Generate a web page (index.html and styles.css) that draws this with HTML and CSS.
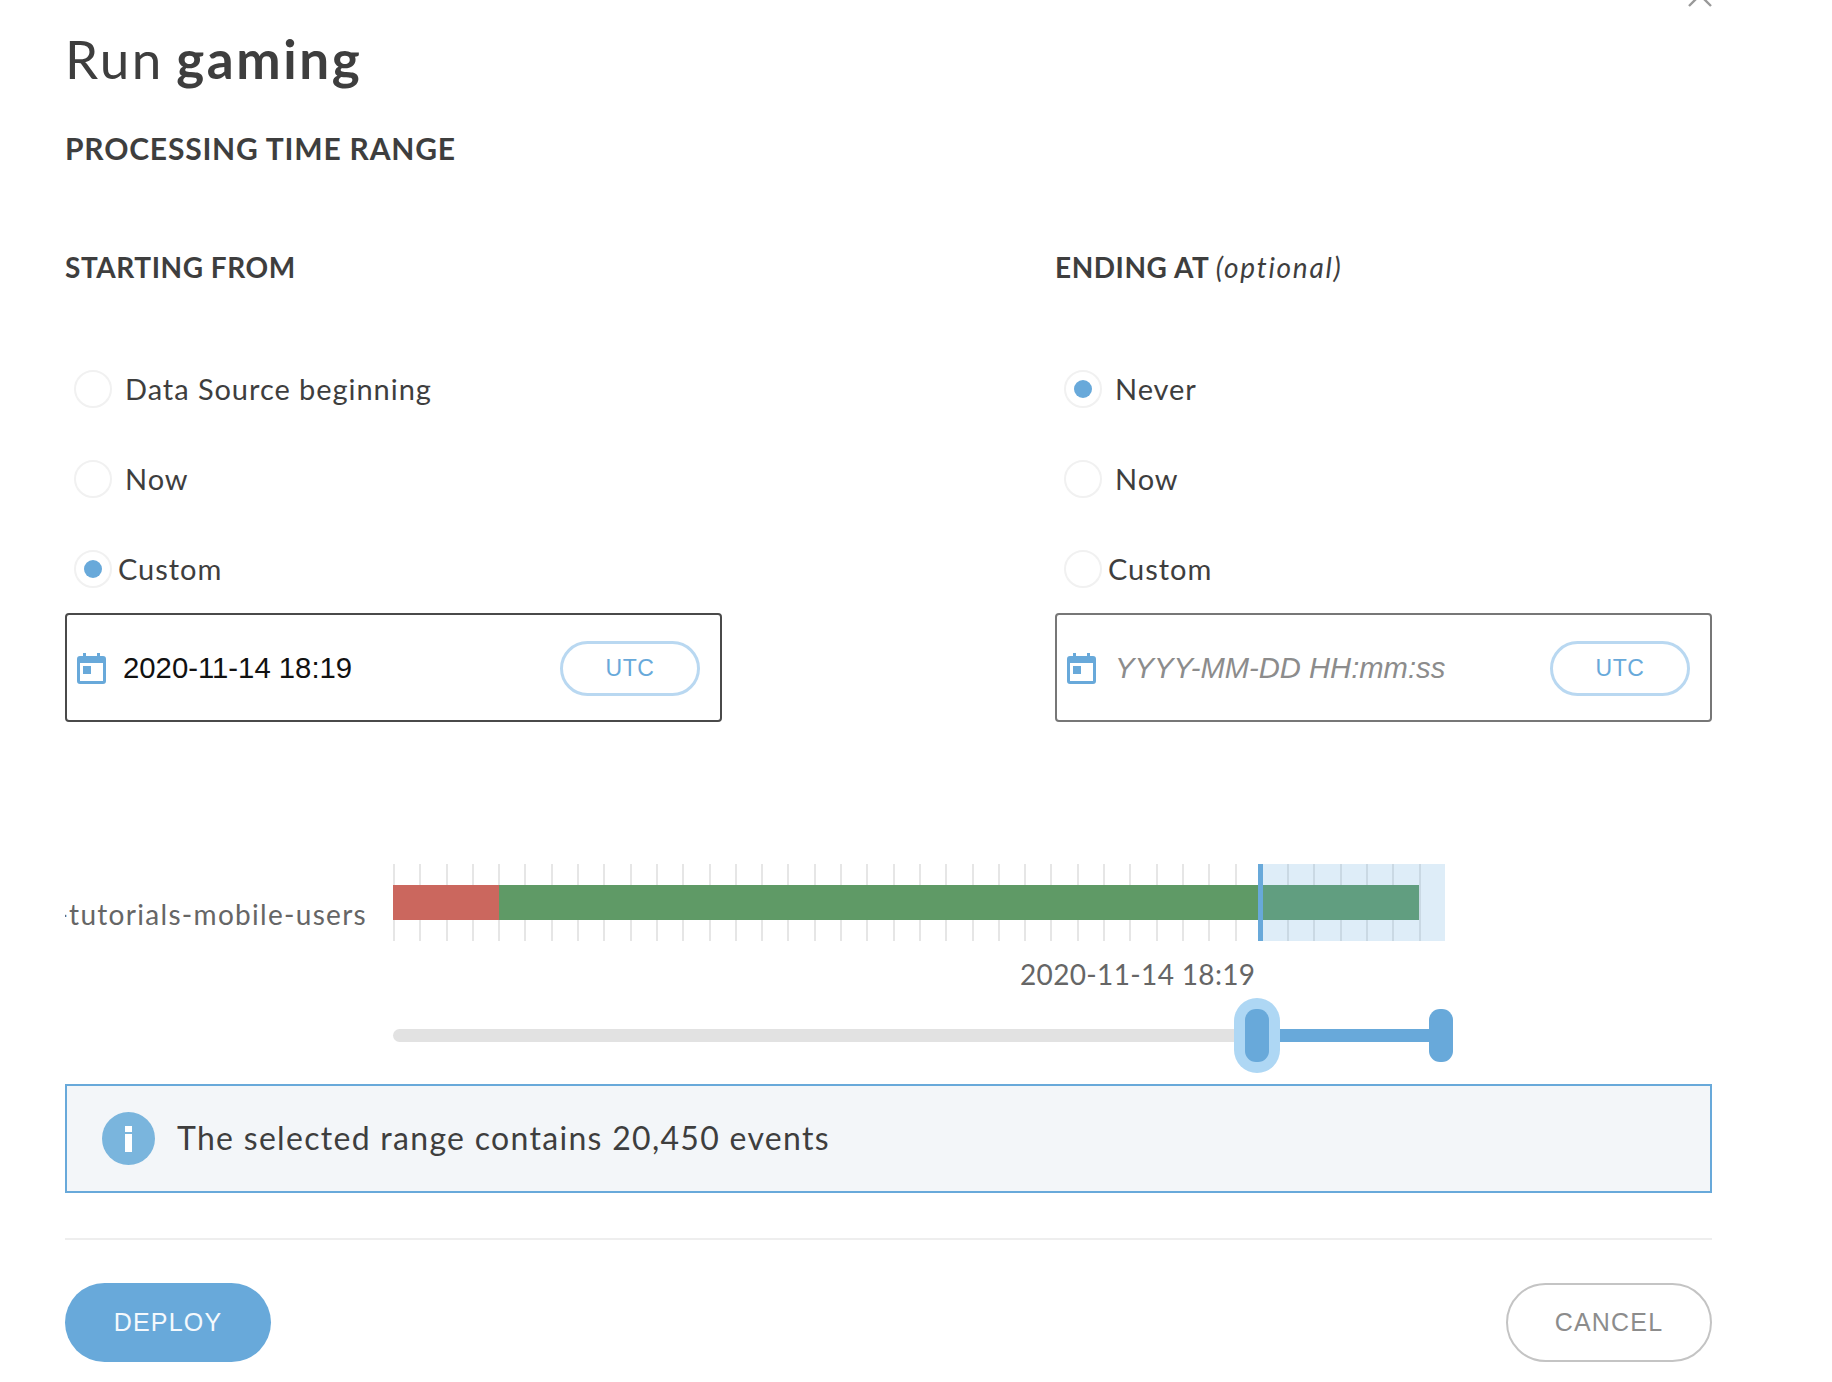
FILE: index.html
```html
<!DOCTYPE html>
<html lang="en">
<head>
<meta charset="utf-8">
<title>Run gaming</title>
<link rel="stylesheet" href="styles.css">
</head>
<body>
<main class="dialog">
  <button class="close" aria-label="Close">
    <svg width="26" height="26" viewBox="0 0 26 26"><path d="M2 2 L24 24 M24 2 L2 24" fill="none" stroke="#999" stroke-width="2.4"/></svg>
  </button>
  <h1 class="title">Run <b>gaming</b></h1>
  <h2 class="section">PROCESSING TIME RANGE</h2>
  <div class="columns">
    <section class="col">
      <h3 class="col-head">STARTING FROM</h3>
      <div class="radios">
        <div class="radio"><span class="dot"></span><span class="radio-label">Data Source beginning</span></div>
        <div class="radio"><span class="dot"></span><span class="radio-label">Now</span></div>
        <div class="radio tight"><span class="dot on"></span><span class="radio-label">Custom</span></div>
      </div>
      <div class="input dark">
        <svg class="cal" width="29" height="31" viewBox="0 0 29 31"><path fill-rule="evenodd" d="M6 0h3v3h11V0h3v3h3a3 3 0 0 1 3 3v22a3 3 0 0 1-3 3H3a3 3 0 0 1-3-3V6a3 3 0 0 1 3-3h3zM3 10v18h23V10z" fill="#68a9da"/><rect x="6" y="13" width="8" height="8" fill="#68a9da"/></svg>
        <span class="value">2020-11-14 18:19</span>
        <span class="utc">UTC</span>
      </div>
    </section>
    <section class="col">
      <h3 class="col-head">ENDING AT <em>(optional)</em></h3>
      <div class="radios">
        <div class="radio"><span class="dot on"></span><span class="radio-label">Never</span></div>
        <div class="radio"><span class="dot"></span><span class="radio-label">Now</span></div>
        <div class="radio tight"><span class="dot"></span><span class="radio-label">Custom</span></div>
      </div>
      <div class="input">
        <svg class="cal" width="29" height="31" viewBox="0 0 29 31"><path fill-rule="evenodd" d="M6 0h3v3h11V0h3v3h3a3 3 0 0 1 3 3v22a3 3 0 0 1-3 3H3a3 3 0 0 1-3-3V6a3 3 0 0 1 3-3h3zM3 10v18h23V10z" fill="#68a9da"/><rect x="6" y="13" width="8" height="8" fill="#68a9da"/></svg>
        <span class="value placeholder">YYYY-MM-DD HH:mm:ss</span>
        <span class="utc">UTC</span>
      </div>
    </section>
  </div>

  <div class="timeline">
    <div class="tl-label"><span>-tutorials-mobile-users</span></div>
    <div class="tl-track">
      <div class="tl-ticks"></div>
      <div class="tl-bar">
        <div class="seg-red"></div>
        <div class="seg-green"></div>
      </div>
      <div class="tl-shade"></div>
    </div>
  </div>

  <div class="range-label">2020-11-14 18:19</div>

  <div class="slider">
    <div class="slider-rail"></div>
    <div class="slider-fill"></div>
    <div class="halo"></div>
    <div class="handle h1"></div>
    <div class="handle h2"></div>
  </div>

  <div class="alert">
    <svg class="info" width="53" height="53" viewBox="0 0 53 53"><circle cx="26.5" cy="26.5" r="26.5" fill="#7ab5dd"/><rect x="23" y="14" width="7" height="6" fill="#fff"/><rect x="23" y="22" width="7" height="18" fill="#fff"/></svg>
    <span class="alert-text">The selected range contains 20,450 events</span>
  </div>

  <hr class="divider">

  <div class="actions">
    <button class="btn primary">DEPLOY</button>
    <button class="btn ghost">CANCEL</button>
  </div>
</main>
</body>
</html>
```
FILE: styles.css
```css
* { box-sizing: border-box; }
html, body { margin: 0; padding: 0; background: #fff; }
body { height: 1382px; overflow: hidden; font-family: "Lato", "Open Sans", sans-serif; color: #3e3e3e; }

.dialog { position: relative; width: 1647px; margin-left: 65px; padding-top: 28px; }

.close { position: absolute; top: -18px; right: -1px; padding: 0; border: 0; background: none; line-height: 0; }

.title { margin: 0; font-size: 53px; line-height: 62px; font-weight: 400; letter-spacing: 2.6px; word-spacing: -4px; color: #3e3e3e; }
.title b { font-weight: 700; }

.section { margin: 38px 0 0; font-size: 30px; line-height: 40px; font-weight: 700; letter-spacing: .8px; color: #3e3e3e; }

.columns { display: grid; grid-template-columns: 657px 657px; column-gap: 333px; margin-top: 79px; }

.col-head { margin: 0; font-size: 28px; line-height: 40px; font-weight: 700; letter-spacing: .55px; color: #3e3e3e; }
.col-head em { font-weight: 400; font-style: italic; letter-spacing: 1.75px; }

.radios { display: flex; flex-direction: column; gap: 52px; margin-top: 83px; padding-left: 9px; }
.radio { display: flex; align-items: center; height: 38px; gap: 13px; }
.radio.tight { gap: 6px; }
.dot { position: relative; flex: none; width: 38px; height: 38px; border-radius: 50%; border: 2px solid #f1f1f1; background: #fff; }
.dot.on::after { content: ""; position: absolute; left: 8px; top: 8px; width: 18px; height: 18px; border-radius: 50%; background: #68a9da; }
.radio-label { font-size: 29px; line-height: 38px; letter-spacing: .95px; color: #3e3e3e; }

.input { display: flex; align-items: center; height: 109px; margin-top: 25px; padding: 1px 20px 0 10px; border: 2px solid #777; border-radius: 4px; }
.input.dark { border-color: #4a4a4a; }
.cal { flex: none; }
.value { flex: 1; margin-left: 17px; font-family: "Liberation Sans", Arial, sans-serif; font-size: 29.3px; color: #111; }
.placeholder { margin-left: 19px; font-size: 29.2px; font-style: italic; color: #8c8c8c; }
.utc { display: flex; align-items: center; justify-content: center; flex: none; width: 140px; height: 55px; border: 3px solid #b9d8f1; border-radius: 28px; font-family: "Liberation Sans", Arial, sans-serif; font-size: 23px; letter-spacing: .6px; color: #68a9da; }

.timeline { display: flex; margin-top: 142px; height: 77px; }
.tl-label { display: flex; justify-content: flex-end; flex: none; width: 302px; margin-top: 30px; overflow: hidden; white-space: nowrap; font-size: 28px; line-height: 40px; letter-spacing: 1.3px; color: #666; }
.tl-track { position: relative; flex: none; width: 1052px; margin-left: 26px; }
.tl-ticks { position: absolute; left: 0; top: 0; bottom: 0; width: 1028px; background: repeating-linear-gradient(to right, #e6e6e6 0, #e6e6e6 2px, transparent 2px, transparent 26.3px); }
.tl-bar { position: relative; display: flex; width: 1026px; height: 35px; margin-top: 21px; }
.seg-red { flex: none; width: 106px; background: #cb675e; }
.seg-green { flex: 1; background: #5f9a66; }
.tl-shade { position: absolute; left: 865px; right: 0; top: 0; bottom: 0; border-left: 5px solid #68a9da; background: rgba(106, 173, 224, .22); }

.range-label { margin-top: 16px; padding-left: 955px; font-size: 28px; line-height: 34px; letter-spacing: .35px; color: #666; }

.slider { position: relative; height: 75px; margin: 7px 0 0 328px; width: 1060px; }
.slider-rail { position: absolute; left: 0; top: 31px; width: 850px; height: 13px; border-radius: 7px 0 0 7px; background: #e2e2e2; }
.slider-fill { position: absolute; left: 880px; right: 12px; top: 31px; height: 13px; background: #68a9da; }
.halo { position: absolute; left: 841px; top: 0; width: 46px; height: 75px; border-radius: 23px; background: #aed7f4; }
.handle { position: absolute; top: 11px; width: 24px; height: 53px; border-radius: 11px; background: #68a9da; }
.h1 { left: 852px; }
.h2 { left: 1036px; }

.alert { display: flex; align-items: center; height: 109px; margin-top: 11px; padding-left: 35px; border: 2px solid #68a9da; background: #f3f6f9; }
.info { flex: none; }
.alert-text { margin: 0 0 2px 22px; font-size: 32px; letter-spacing: 1.3px; color: #3e3e3e; }

.divider { height: 2px; margin: 45px 0 0; border: 0; background: #eee; }

.actions { display: flex; justify-content: space-between; margin-top: 43px; }
.btn { width: 206px; height: 79px; padding: 0; border-radius: 40px; font-family: "Liberation Sans", Arial, sans-serif; font-size: 25px; letter-spacing: 1.2px; }
.primary { border: 0; background: #68a9da; color: #f4f9fd; }
.ghost { border: 2px solid #c4c4c4; background: #fff; color: #8c8c8c; }
```
